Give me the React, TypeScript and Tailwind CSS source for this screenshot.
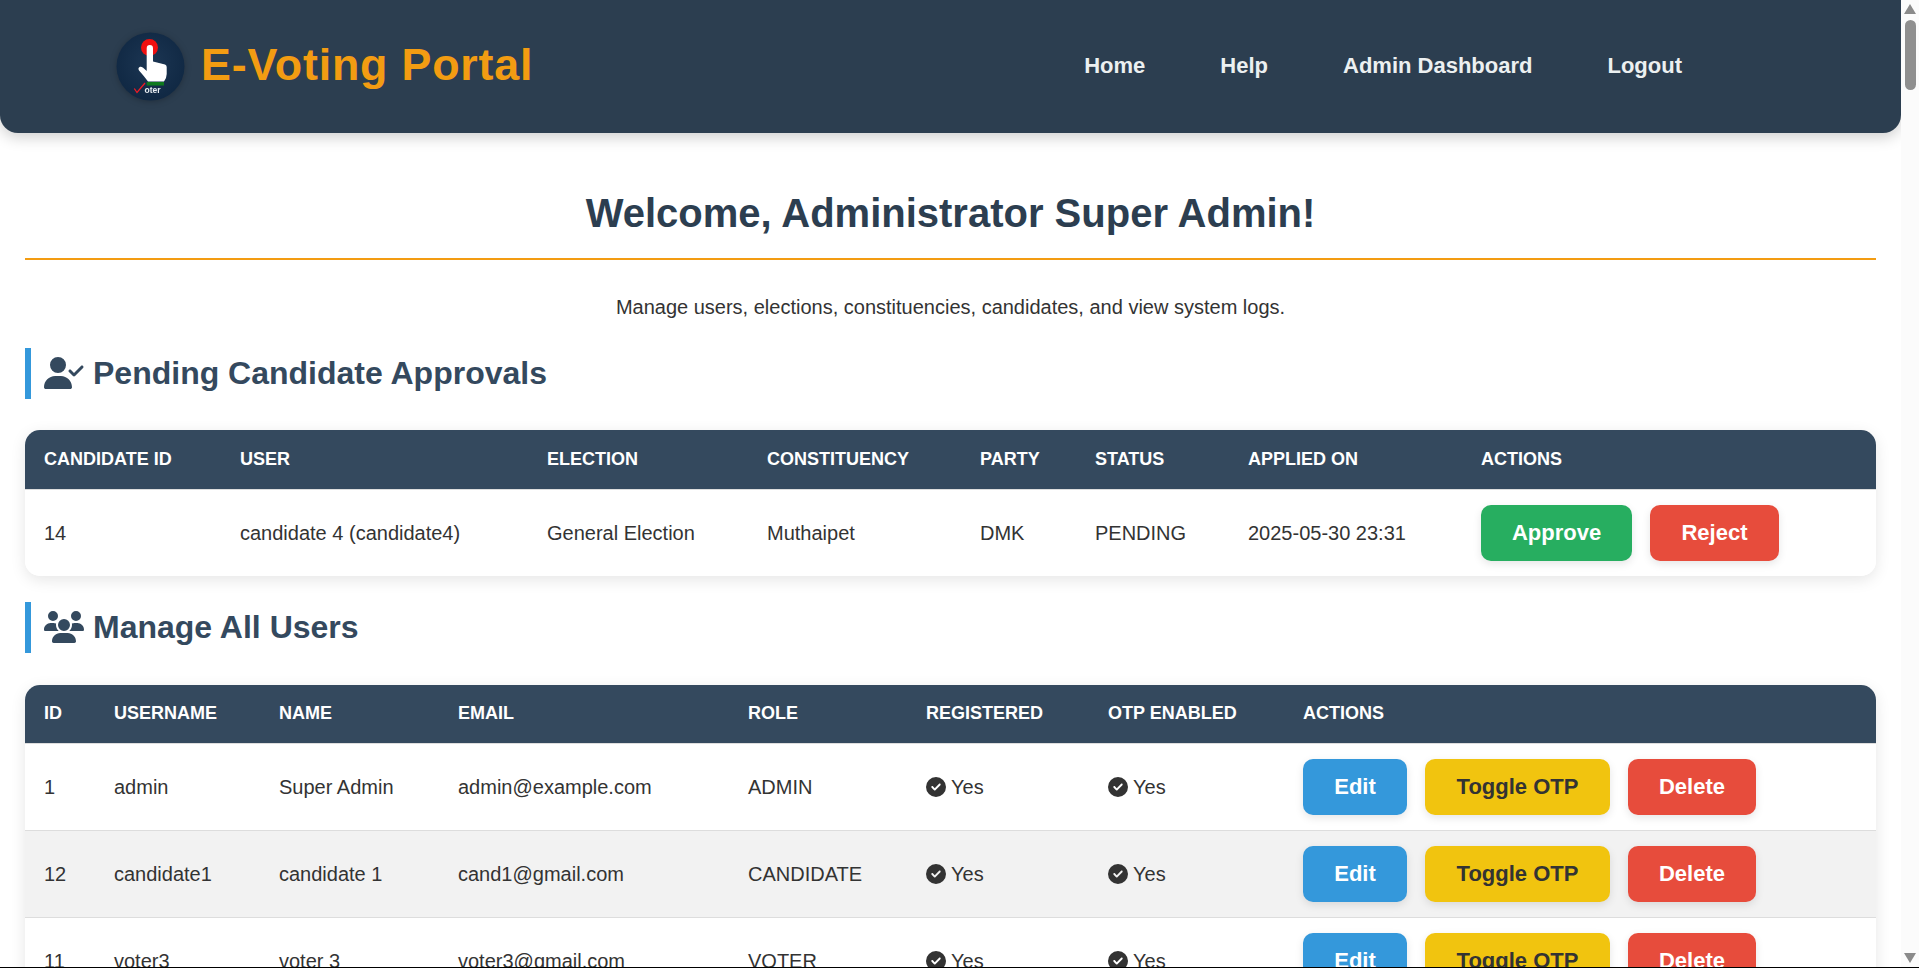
import React from "react";
import { FaUserCheck, FaUsers, FaCircleCheck } from "react-icons/fa6";

function Logo() {
  return (
    <svg viewBox="0 0 69 69" className="w-[69px] h-[69px] shrink-0 drop-shadow-[0_1px_3px_rgba(0,0,0,0.25)]">
      <defs>
        <radialGradient id="lg" cx="50%" cy="45%" r="60%">
          <stop offset="0%" stopColor="#1c3653" />
          <stop offset="100%" stopColor="#0f2742" />
        </radialGradient>
      </defs>
      <circle cx="34.5" cy="34.5" r="34" fill="url(#lg)" />
      <circle cx="33.5" cy="15.5" r="8.5" fill="#f01010" />
      <path
        d="M30.700 16.200a3.150 3.150 0 0 1 6.300 0V29.500L49 32.500Q50.700 33 50.700 35V42Q50.700 46 48 49.500H32Q28 44 23 38.500Q21.500 36 24 34.800Q26 34 30.700 39Z"
        fill="#ffffff"
      />
      <rect x="30.700" y="50" width="17.300" height="3.500" fill="#0f7a1e" />
      <path d="M18.300 56.500l2.700 4 8-9.500" fill="none" stroke="#ee1c25" strokeWidth="1.300" />
      <text x="28.500" y="61" fontSize="8.5" fontWeight="700" fill="#e8edf2" fontFamily="'Liberation Sans', sans-serif">oter</text>
    </svg>
  );
}

function Btn({ className, children }: { className: string; children: React.ReactNode }) {
  return (
    <button className={`h-[56px] rounded-[10px] text-[22px] font-bold shadow-[0_3px_8px_rgba(0,0,0,0.1)] ${className}`}>
      {children}
    </button>
  );
}

function Yes() {
  return (
    <span className="flex items-center gap-[5px]">
      <FaCircleCheck className="w-[20px] h-[20px] text-[#333333]" />
      Yes
    </span>
  );
}

function Heading({ icon, children }: { icon: React.ReactNode; children: React.ReactNode }) {
  return (
    <h2 className="flex items-center h-[51px] border-l-[6px] border-[#3498db] pl-[13px] pb-[2px] gap-[9px] text-[32px] font-bold text-[#34495e]">
      {icon}
      {children}
    </h2>
  );
}

const th = "px-[19px] text-left font-bold text-[18px] uppercase text-white align-middle";
const td = "px-[19px] align-middle";

const users = [
  ["1", "admin", "Super Admin", "admin@example.com", "ADMIN"],
  ["12", "candidate1", "candidate 1", "cand1@gmail.com", "CANDIDATE"],
  ["11", "voter3", "voter 3", "voter3@gmail.com", "VOTER"],
];

export default function App() {
  return (
    <div className="flex h-screen w-full overflow-hidden bg-white border-b border-black text-[20px] text-[#333333] font-['Liberation_Sans',Arial,sans-serif]">
      <main className="flex-1 min-w-0 overflow-hidden">
        <header className="h-[133px] flex items-center bg-[#2c3e50] rounded-b-[18px] shadow-[0_4px_15px_rgba(0,0,0,0.2)] pl-[116px]">
          <Logo />
          <span className="ml-[16px] pb-[3px] text-[44.8px] font-bold tracking-[0.8px] text-[#f39c12]">E-Voting Portal</span>
          <nav className="ml-auto mr-[219px] pb-[2px] flex gap-[75px] text-[22px] font-bold text-[#ecf0f1]">
            <a>Home</a>
            <a>Help</a>
            <a>Admin Dashboard</a>
            <a>Logout</a>
          </nav>
        </header>

        <div className="px-[25px]">
          <h1 className="mt-[57px] pb-[22px] border-b-2 border-[#f39c12] text-center text-[40px] leading-[46px] font-bold text-[#2c3e50]">
            Welcome, Administrator Super Admin!
          </h1>
          <p className="mt-[35px] text-center leading-[24px]">
            Manage users, elections, constituencies, candidates, and view system logs.
          </p>

          <div className="mt-[29px]">
            <Heading icon={<FaUserCheck className="w-[40px] h-[32px]" />}>Pending Candidate Approvals</Heading>
          </div>

          <div className="mt-[31px] rounded-[15px] overflow-hidden shadow-[0_4px_15px_rgba(0,0,0,0.1)]">
            <table className="w-full table-fixed border-collapse">
              <colgroup>
                <col className="w-[196px]" />
                <col className="w-[307px]" />
                <col className="w-[220px]" />
                <col className="w-[213px]" />
                <col className="w-[115px]" />
                <col className="w-[153px]" />
                <col className="w-[233px]" />
                <col />
              </colgroup>
              <thead>
                <tr className="h-[59px] bg-[#34495e] border-b border-[#dddddd]">
                  {["Candidate ID", "User", "Election", "Constituency", "Party", "Status", "Applied On", "Actions"].map((h) => (
                    <th key={h} className={th}>{h}</th>
                  ))}
                </tr>
              </thead>
              <tbody>
                <tr className="h-[87px] bg-white">
                  <td className={td}>14</td>
                  <td className={td}>candidate 4 (candidate4)</td>
                  <td className={td}>General Election</td>
                  <td className={td}>Muthaipet</td>
                  <td className={td}>DMK</td>
                  <td className={td}>PENDING</td>
                  <td className={td}>2025-05-30 23:31</td>
                  <td className={td}>
                    <div className="flex gap-[18px]">
                      <Btn className="w-[151px] bg-[#27ae60] text-white">Approve</Btn>
                      <Btn className="w-[129px] bg-[#e74c3c] text-white">Reject</Btn>
                    </div>
                  </td>
                </tr>
              </tbody>
            </table>
          </div>

          <div className="mt-[26px]">
            <Heading icon={<FaUsers className="w-[40px] h-[32px]" />}>Manage All Users</Heading>
          </div>

          <div className="mt-[32px] rounded-t-[15px] overflow-hidden shadow-[0_4px_15px_rgba(0,0,0,0.1)]">
            <table className="w-full table-fixed border-collapse">
              <colgroup>
                <col className="w-[70px]" />
                <col className="w-[165px]" />
                <col className="w-[179px]" />
                <col className="w-[290px]" />
                <col className="w-[178px]" />
                <col className="w-[182px]" />
                <col className="w-[195px]" />
                <col />
              </colgroup>
              <thead>
                <tr className="h-[58px] bg-[#34495e] border-b border-[#dddddd]">
                  {["ID", "Username", "Name", "Email", "Role", "Registered", "OTP Enabled", "Actions"].map((h) => (
                    <th key={h} className={th}>{h}</th>
                  ))}
                </tr>
              </thead>
              <tbody>
                {users.map((u, i) => (
                  <tr key={u[0]} className={`h-[87px] border-b border-[#dddddd] ${i === 1 ? "bg-[#f2f2f2]" : "bg-white"}`}>
                    {u.map((c, j) => (
                      <td key={j} className={td}>{c}</td>
                    ))}
                    <td className={td}><Yes /></td>
                    <td className={td}><Yes /></td>
                    <td className={td}>
                      <div className="flex gap-[18px]">
                        <Btn className="w-[104px] bg-[#3498db] text-white">Edit</Btn>
                        <Btn className="w-[185px] bg-[#f1c40f] text-[#333333]">Toggle OTP</Btn>
                        <Btn className="w-[128px] bg-[#e74c3c] text-white">Delete</Btn>
                      </div>
                    </td>
                  </tr>
                ))}
              </tbody>
            </table>
          </div>
        </div>
      </main>

      <aside className="w-[18px] shrink-0 flex flex-col items-center bg-[#fbfbfb]">
        <svg viewBox="0 0 12 10" className="mt-[4px] w-[12px] h-[10px] shrink-0 fill-[#8a8a8a]"><path d="M6 0l6 10H0z" /></svg>
        <div className="mt-[6px] w-[11px] h-[70px] rounded-full bg-[#8f8f8f]" />
        <svg viewBox="0 0 12 10" className="mt-auto mb-[4px] w-[12px] h-[10px] shrink-0 fill-[#8a8a8a]"><path d="M0 0h12L6 10z" /></svg>
      </aside>
    </div>
  );
}
